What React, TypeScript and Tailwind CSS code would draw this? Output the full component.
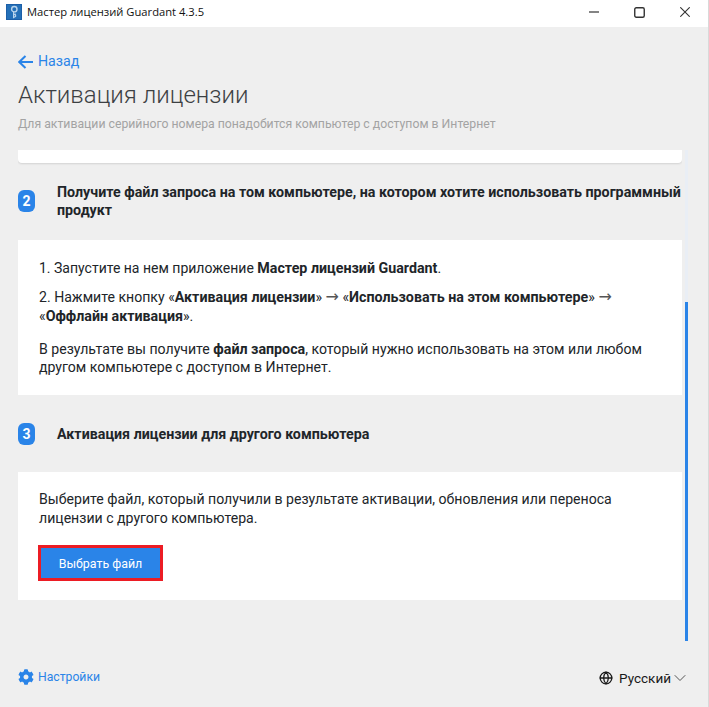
import { ChevronDown, Globe } from 'lucide-react'
import { FaCog } from 'react-icons/fa'

function StepHeading({ num, children }: { num: number; children: React.ReactNode }) {
  return (
    <div className="flex items-center">
      <span className="flex h-[22px] w-[17px] shrink-0 items-center justify-center rounded-[6px] bg-[#2a84e8] text-[14px] font-bold text-white">
        {num}
      </span>
      <h3 className="ml-[22px] text-[14.25px] leading-[18px] font-bold text-[#212529]">{children}</h3>
    </div>
  )
}

function Arrow() {
  return <span className="font-['DejaVu_Sans',sans-serif] text-[16px] leading-[16px] text-[#555]">→</span>
}

export default function App() {
  return (
    <div className="flex h-[707px] w-[709px] flex-col overflow-hidden border-r border-[#d9d9d9] bg-[#efefef] font-['Roboto',sans-serif]">
      {/* window title bar */}
      <div className="flex h-[27px] shrink-0 items-center bg-white pb-[3px]">
        <svg className="ml-[6px] h-[16px] w-[16px]" viewBox="0 0 16 16">
          <rect width="16" height="16" fill="#1c5fa8" />
          <rect x="1" y="1" width="14" height="14" fill="#2470b8" />
          <circle cx="8.3" cy="5.2" r="2.7" fill="none" stroke="#b9d4ec" strokeWidth="1.4" />
          <path d="M7.6 8v5.5l2-1V11l-1-.5 1-.8" fill="none" stroke="#b9d4ec" strokeWidth="1.2" />
        </svg>
        <span className="ml-[5px] font-['Open_Sans',sans-serif] text-[11.2px] text-[#111]">
          Мастер лицензий Guardant 4.3.5
        </span>
        <div className="ml-auto flex items-center gap-[35px] pr-[18px] text-[#333]">
          <svg className="h-[10px] w-[10px]" viewBox="0 0 10 10">
            <path d="M0 5h10" stroke="currentColor" strokeWidth="1.2" />
          </svg>
          <svg className="h-[11px] w-[11px]" viewBox="0 0 11 11">
            <rect x=".75" y=".75" width="9.5" height="9.5" rx="1.5" fill="none" stroke="currentColor" strokeWidth="1.4" />
          </svg>
          <svg className="h-[10px] w-[10px]" viewBox="0 0 10 10">
            <path d="M.3.3l9.4 9.4M9.7.3L.3 9.7" stroke="currentColor" strokeWidth="1.1" />
          </svg>
        </div>
      </div>

      {/* page header */}
      <div className="flex h-[123px] shrink-0 flex-col pl-[18px]">
        <a className="mt-[27px] flex h-[16px] items-center text-[14.2px] text-[#2a84e8]">
          <svg className="h-[16px] w-[16px]" viewBox="0 0 16 16">
            <path d="M1 8h14M7.5 2L1.3 8l6.2 6" fill="none" stroke="currentColor" strokeWidth="2" />
          </svg>
          <span className="ml-[4px]">Назад</span>
        </a>
        <h1 className="mt-[10px] text-[24px] leading-[30px] font-light text-[#3c4043]">Активация лицензии</h1>
        <p className="mt-[6px] text-[12.25px] leading-[16px] text-[#a3a3a3]">
          Для активации серийного номера понадобится компьютер с доступом в Интернет
        </p>
      </div>

      {/* scrolling content */}
      <div className="flex h-[491px] shrink-0">
        <div className="ml-[18px] w-[664px] overflow-hidden">
          <div className="h-[13px] rounded-b-[4px] bg-white shadow-[0_1px_2px_rgba(0,0,0,0.12)]" />

          <div className="mt-[20px]">
            <StepHeading num={2}>
              Получите файл запроса на том компьютере, на котором хотите использовать программный продукт
            </StepHeading>
          </div>

          <div className="mt-[21px] h-[155px] bg-white px-[21px] pt-[19px] text-[14.1px] leading-[18px] text-[#212529]">
            <p className="text-[14px]">
              1. Запустите на нем приложение <b className="text-[14.25px]">Мастер лицензий Guardant</b>.
            </p>
            <p className="mt-[11px] leading-[19px]">
              2. Нажмите кнопку «<b className="text-[14.25px]">Активация лицензии</b>» <Arrow /> «
              <b className="text-[14.25px]">Использовать на этом компьютере</b>» <Arrow /> «
              <b className="text-[14.25px]">Оффлайн активация</b>».
            </p>
            <p className="mt-[14px]">
              В результате вы получите <b className="text-[14.25px]">файл запроса</b>, который нужно использовать на
              этом или любом другом компьютере с доступом в Интернет.
            </p>
          </div>

          <div className="mt-[28px]">
            <StepHeading num={3}>Активация лицензии для другого компьютера</StepHeading>
          </div>

          <div className="mt-[27px] h-[128px] bg-white px-[21px] pt-[18px] text-[14.1px] leading-[19px] text-[#212529]">
            <p>
              Выберите файл, который получили в результате активации, обновления или переноса лицензии с другого
              компьютера.
            </p>
            <button className="mt-[17px] -ml-px flex h-[36px] w-[125px] items-center justify-center border-[3px] border-[#ec1c24] bg-[#2a84e8] text-[12.4px] text-white">
              Выбрать файл
            </button>
          </div>
        </div>

        {/* scrollbar */}
        <div className="ml-[3px] flex w-[3px] flex-col bg-[#e9eef5]">
          <div className="mt-[152px] h-[339px] bg-[#2a84e8]" />
        </div>
      </div>

      {/* footer */}
      <div className="flex flex-1 items-start justify-between pt-[27px] pr-[18px] pl-[18px]">
        <a className="flex items-center text-[12.2px] text-[#2a84e8]">
          <FaCog className="h-[16px] w-[16px]" />
          <span className="ml-[4px]">Настройки</span>
        </a>
        <div className="flex items-center text-[13.5px] text-[#1a1a1a]">
          <Globe className="h-[14px] w-[14px]" strokeWidth={2.2} />
          <span className="ml-[6px]">Русский</span>
          <ChevronDown className="-ml-px h-[20px] w-[20px] text-[#555]" strokeWidth={1.2} />
        </div>
      </div>
    </div>
  )
}
